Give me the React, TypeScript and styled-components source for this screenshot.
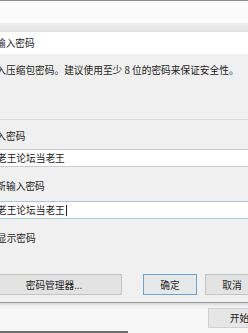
import styled, { createGlobalStyle } from 'styled-components'

const GlobalStyle = createGlobalStyle`
  html, body {
    margin: 0;
    padding: 0;
  }
  body {
    width: 248px;
    height: 333px;
    overflow: hidden;
    background: #ffffff;
    font-family: "Noto Sans CJK SC", "Noto Sans", sans-serif;
    color: #1c1c1c;
  }
`

const Page = styled('div')`
  width: 248px;
  height: 333px;
  overflow: hidden;
  display: flex;
  flex-direction: column;
  background: #ffffff;
`

const BackWindow = styled('div')`
  height: 22px;
  flex-shrink: 0;
  border-top: 1px solid #8e8e8e;
  background: #fbfbfb;
`

const Shadow = styled('div')`
  height: 9px;
  flex-shrink: 0;
  background: linear-gradient(#eeeeee, #e3e3e3);
`

const Dialog = styled('section')`
  margin-left: -35px;
  width: 340px;
  flex-shrink: 0;
  background: #f0f0f0;
  border-bottom: 1px solid #9d9d9d;
  box-shadow: 0 2px 3px rgba(0, 0, 0, 0.12);
  position: relative;
`

const TitleBar = styled('header')`
  height: 22px;
  background: #ffffff;
  display: flex;
  align-items: center;
  padding-left: 31px;
  font-size: 9.7px;
`

const Body = styled('div')`
  display: flex;
  flex-direction: column;
  padding: 9px 0 7px 12px;
`

const Text = styled('div')<{ $top: number }>`
  margin-top: ${(p) => p.$top}px;
  font-size: 9.7px;
  line-height: 14px;
  white-space: nowrap;
`

const Divider = styled('div')`
  margin-top: 42px;
  margin-left: -12px;
  height: 1px;
  background: #dadada;
`

const Field = styled('div')<{ $top: number; $focused?: boolean }>`
  margin-top: ${(p) => p.$top}px;
  margin-left: 16px;
  height: 18px;
  box-sizing: border-box;
  background: #ffffff;
  border: 1px solid ${(p) => (p.$focused ? '#a8ccd7' : '#cbcbcb')};
  padding-left: 3px;
  display: flex;
  align-items: center;
  font-size: 9.7px;
  white-space: nowrap;
`

const Caret = styled('span')`
  display: inline-block;
  width: 1px;
  height: 11px;
  margin-left: 1px;
  background: #222222;
`

const CheckRow = styled('label')`
  margin-top: 12px;
  display: flex;
  align-items: center;
  gap: 5px;
  font-size: 9.7px;
  line-height: 14px;
`

const Box = styled('span')`
  width: 11px;
  height: 11px;
  box-sizing: border-box;
  border: 1px solid #333333;
  background: #ffffff;
  margin-left: 4px;
`

const Buttons = styled('div')`
  margin-top: 29px;
  display: flex;
`

const Button = styled('button')<{ $width: number; $gap?: number; $primary?: boolean }>`
  width: ${(p) => p.$width}px;
  height: 21px;
  margin-left: ${(p) => p.$gap ?? 0}px;
  flex-shrink: 0;
  box-sizing: border-box;
  padding: 0;
  background: ${(p) => (p.$primary ? '#e6e8ea' : '#e3e3e3')};
  border: 1px solid ${(p) => (p.$primary ? '#6aa3d6' : '#c4c4c4')};
  font-family: inherit;
  font-size: 9.7px;
  color: #1c1c1c;
`

const Taskbar = styled('div')`
  flex: 1;
  display: flex;
  flex-direction: column;
  background: #f6f6f6;
  padding-top: 5px;
`

const StartButton = styled('button')`
  margin-left: 208px;
  width: 63px;
  height: 20px;
  flex-shrink: 0;
  box-sizing: border-box;
  padding: 0;
  background: #e6e6e6;
  border: 1px solid #d0d0d0;
  font-family: inherit;
  font-size: 9.7px;
  color: #1c1c1c;
`

const EdgeLine = styled('div')`
  margin-top: 3px;
  width: 128px;
  height: 2px;
  background: #6e6e6e;
`

function App() {
  return (
    <>
      <GlobalStyle />
      <Page>
        <BackWindow />
        <Shadow />
        <Dialog>
          <TitleBar>输入密码</TitleBar>
          <Body>
            <Text $top={0}>请输入压缩包密码。建议使用至少 8 位的密码来保证安全性。</Text>
            <Divider />
            <Text $top={9}>请输入密码</Text>
            <Field $top={6}>老王论坛当老王</Field>
            <Text $top={12}>请重新输入密码</Text>
            <Field $top={8} $focused>
              老王论坛当老王
              <Caret />
            </Field>
            <CheckRow>
              <Box />
              显示密码
            </CheckRow>
            <Buttons>
              <Button $width={136} $gap={9}>密码管理器...</Button>
              <Button $width={54} $gap={21} $primary>确定</Button>
              <Button $width={54} $gap={8}>取消</Button>
            </Buttons>
          </Body>
        </Dialog>
        <Taskbar>
          <StartButton>开始</StartButton>
          <EdgeLine />
        </Taskbar>
      </Page>
    </>
  )
}

export default App
